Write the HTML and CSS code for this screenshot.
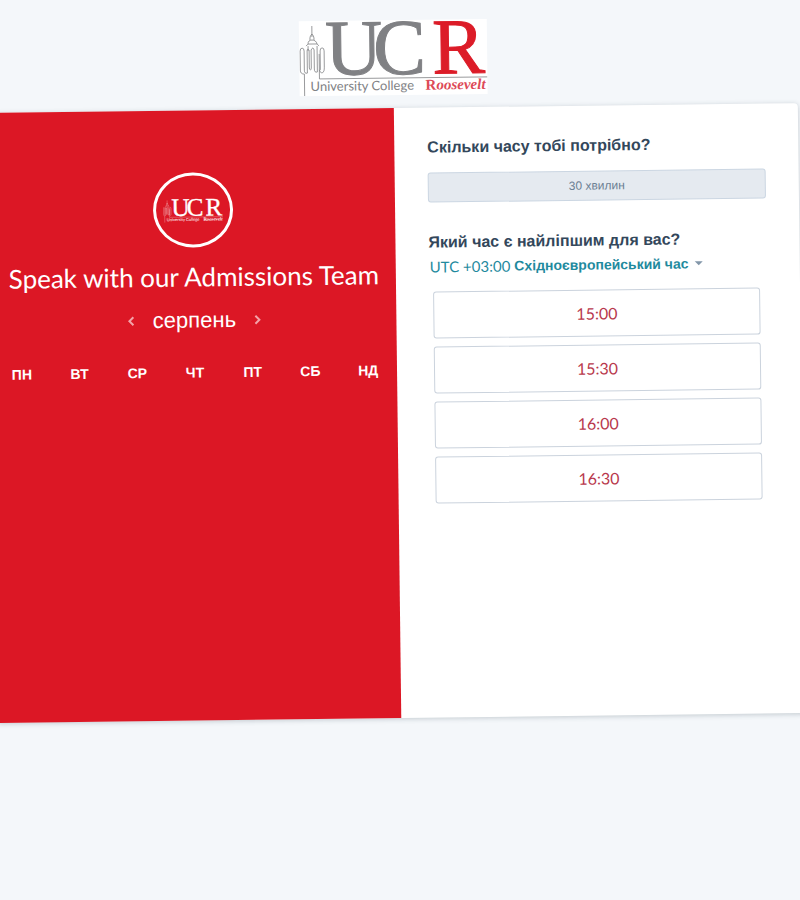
FILE: index.html
```
<!DOCTYPE html>
<html lang="uk">
<head>
<meta charset="utf-8">
<meta name="viewport" content="width=device-width, initial-scale=1">
<title>Speak with our Admissions Team</title>
<link rel="stylesheet" href="styles.css">
</head>
<body>
<div class="page">
  <header class="header">
    <svg class="logo" viewBox="0 0 188 75" role="img" aria-label="University College Roosevelt">
      <defs>
        <g id="ucr">
          <g class="tower">
            <path d="M13 5V16M11 19V17Q11 15 13 13Q15 15 15 17V19M9 23Q9 19 13 19Q17 19 18 23M7 25L9 23H18L20 25M9 25V30M18 25V30"/>
            <path d="M5 75V53Q1 53 1 49V30Q1 27 3 27Q5 27 5 30V49Q5 53 8 52V30Q8 27 10 29V47Q11 51 12 47V29Q14 25 15 29V48Q15 52 18 51V30"/>
            <path d="M20 58V33M20 49Q22 54 24 51Q25 50 25 47V30Q25 27 23 27Q21 27 21 30V49"/>
            <path d="M20 58H188"/>
          </g>
          <text class="letters" y="54"><tspan x="26">U</tspan><tspan x="74">C</tspan><tspan class="accent" x="133">R</tspan></text>
          <text class="name" x="11" y="70">University College</text>
          <text class="name-serif" x="126" y="70">R<tspan class="slanted">oosevelt</tspan></text>
        </g>
      </defs>
      <use href="#ucr"/>
    </svg>
  </header>

  <main class="card">
    <section class="calendar">
      <div class="avatar">
        <svg class="avatar-logo" viewBox="0 0 188 75" aria-hidden="true"><use href="#ucr"/></svg>
      </div>
      <h1 class="title">Speak with our Admissions Team</h1>
      <div class="month">
        <button class="arrow" type="button" aria-label="Попередній місяць">
          <svg viewBox="0 0 10 12"><path d="M7 2L3 6L7 10"/></svg>
        </button>
        <h2 class="month-name">серпень</h2>
        <button class="arrow" type="button" aria-label="Наступний місяць">
          <svg viewBox="0 0 10 12"><path d="M3 2L7 6L3 10"/></svg>
        </button>
      </div>
      <table class="days">
        <thead>
          <tr><th scope="col">ПН</th><th scope="col">ВТ</th><th scope="col">СР</th><th scope="col">ЧТ</th><th scope="col">ПТ</th><th scope="col">СБ</th><th scope="col">НД</th></tr>
        </thead>
      </table>
    </section>

    <section class="booking">
      <h2 class="question">Скільки часу тобі потрібно?</h2>
      <button class="duration" type="button">30 хвилин</button>
      <h2 class="question">Який час є найліпшим для вас?</h2>
      <button class="timezone" type="button" aria-haspopup="listbox"><span class="offset">UTC +03:00</span> <span class="zone">Східноєвропейський час</span><span class="caret"></span></button>
      <div class="slots">
        <button class="slot" type="button">15:00</button>
        <button class="slot" type="button">15:30</button>
        <button class="slot" type="button">16:00</button>
        <button class="slot" type="button">16:30</button>
      </div>
    </section>
  </main>
</div>
</body>
</html>
```
FILE: styles.css
```
* {
  box-sizing: border-box;
}

html {
  background: #f4f7fa;
}

body {
  margin: 0;
  overflow-x: hidden;
  font-family: "Liberation Sans", sans-serif;
  color: #33475b;
}

h1,
h2 {
  margin: 0;
}

button {
  padding: 0;
  border: 0;
  background: none;
  font: inherit;
  cursor: pointer;
}

/* The whole sheet leans slightly to the left and bleeds past both sides. */
.page {
  margin: 0 -2px 0 -6px;
  padding: 20px 0 40px;
  transform: rotate(-0.7deg);
  transform-origin: 50% 450px;
}

.header {
  display: flex;
  justify-content: center;
  margin-bottom: 13px;
}

.logo {
  width: 188px;
  height: 75px;
  background: #fff;
  --mark: #808184;
  --accent: #dc1c28;
  --serif: #dd4a57;
}

.avatar-logo {
  width: 60px;
  height: 24px;
  --mark: #fff;
  --accent: #fff;
  --serif: #fff;
}

.tower {
  fill: none;
  stroke: var(--mark);
  stroke-width: 0.8;
}

.letters {
  font: 79px "Liberation Serif", serif;
  fill: var(--mark);
  stroke: var(--mark);
  stroke-width: 1;
}

.accent {
  fill: var(--accent);
  stroke: var(--accent);
}

.name {
  font: 13px Lato, sans-serif;
  fill: var(--mark);
}

.name-serif {
  font: bold 15px "Liberation Serif", serif;
  fill: var(--serif);
}

.slanted {
  font-style: italic;
}

.card {
  display: grid;
  grid-template-columns: 1fr 1fr;
  min-height: 610px;
  border-radius: 4px;
  background: #fff;
  box-shadow: 0 1px 5px rgba(45, 62, 80, 0.25);
}

.calendar {
  padding-top: 62px;
  background: #dc1725;
  color: #fff;
  text-align: center;
}

.avatar {
  display: flex;
  align-items: center;
  justify-content: center;
  width: 80px;
  height: 75px;
  margin: 0 auto 14px;
  border: 3px solid #fff;
  border-radius: 50%;
}

.title {
  font: 400 26px/30px Lato, sans-serif;
  white-space: nowrap;
}

.month {
  display: flex;
  align-items: center;
  justify-content: center;
  gap: 16px;
  margin-top: 15px;
}

.month-name {
  font-size: 22px;
  font-weight: 400;
  line-height: 28px;
}

.arrow {
  display: flex;
  color: #f3a2a8;
}

.arrow svg {
  width: 10px;
  height: 12px;
  fill: none;
  stroke: currentColor;
  stroke-width: 2;
}

.days {
  width: 100%;
  margin-top: 30px;
  border-collapse: collapse;
  table-layout: fixed;
}

.days th {
  padding: 0;
  font-size: 14px;
  line-height: 16px;
}

.booking {
  display: flex;
  flex-direction: column;
  align-items: flex-start;
  padding: 30px 33px 0;
}

.question {
  font-size: 16px;
  line-height: 20px;
}

.duration {
  width: 100%;
  height: 30px;
  margin: 15px 0 30px;
  border: 1px solid #cbd6e2;
  border-radius: 3px;
  background: #e5eaf0;
  color: #6b7f93;
  font-size: 12px;
}

.timezone {
  display: flex;
  align-items: center;
  gap: 4px;
  margin: 4px 0 0 1px;
  color: #1f8a9e;
  font-size: 14px;
  line-height: 20px;
}

.offset {
  font-family: Lato, sans-serif;
  font-size: 15px;
}

.zone {
  font-weight: 700;
}

.caret {
  margin-left: 2px;
  border: 4px solid transparent;
  border-top-color: #8296a9;
  border-bottom: 0;
}

.slots {
  display: grid;
  gap: 8px;
  align-self: stretch;
  margin: 15px 7px 0 4px;
}

.slot {
  height: 47px;
  border: 1px solid #cbd3dd;
  border-radius: 3px;
  background: #fff;
  color: #b8384c;
  font-family: Lato, sans-serif;
  font-size: 16px;
}
```
